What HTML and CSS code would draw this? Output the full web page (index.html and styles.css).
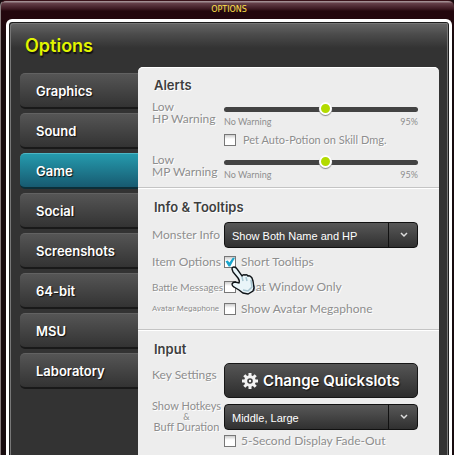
FILE: index.html
```html
<!DOCTYPE html>
<html lang="en">
<head>
  <meta charset="UTF-8">
  <meta name="viewport" content="width=device-width, initial-scale=1.0">
  <title>Options</title>
  <link rel="stylesheet" href="styles.css">
</head>
<body>
  <div class="window">
    <div class="titlebar">OPTIONS</div>

    <div class="panel">
      <h1 class="panel-title">Options</h1>

      <div class="panel-body">
        <nav class="tabs">
          <button type="button" class="tab">Graphics</button>
          <button type="button" class="tab">Sound</button>
          <button type="button" class="tab active">Game</button>
          <button type="button" class="tab">Social</button>
          <button type="button" class="tab">Screenshots</button>
          <button type="button" class="tab">64-bit</button>
          <button type="button" class="tab">MSU</button>
          <button type="button" class="tab">Laboratory</button>
        </nav>

        <form class="settings">
          <section class="section alerts">
            <h2>Alerts</h2>
            <div class="row slider-row">
              <label class="label two-line" for="hpWarning">Low<br>HP Warning</label>
              <div class="slider">
                <input type="range" id="hpWarning" min="0" max="95" value="50">
                <div class="scale"><span>No Warning</span><span>95%</span></div>
              </div>
            </div>
            <div class="row pet-row">
              <label class="check small"><input type="checkbox"> Pet Auto-Potion on Skill Dmg.</label>
            </div>
            <div class="row slider-row">
              <label class="label two-line" for="mpWarning">Low<br>MP Warning</label>
              <div class="slider">
                <input type="range" id="mpWarning" min="0" max="95" value="50">
                <div class="scale"><span>No Warning</span><span>95%</span></div>
              </div>
            </div>
          </section>

          <section class="section">
            <h2>Info &amp; Tooltips</h2>
            <div class="row select-row">
              <label class="label" for="monsterInfo">Monster Info</label>
              <div class="dropdown">
                <select id="monsterInfo">
                  <option>Show Both Name and HP</option>
                </select>
                <svg class="arrow" viewBox="0 0 8 6"><path d="M1 1l3 3 3-3" /></svg>
              </div>
            </div>
            <div class="row check-row">
              <span class="label">Item Options</span>
              <label class="check">
                <input type="checkbox" checked> Short Tooltips
                <svg class="pointer" viewBox="0 0 25 29">
                  <path class="hand" d="M1 3Q1 1 3 1Q5 1 6 3L11 10Q12 8 14 9Q16 8 17 10Q19 9 21 12L22 15L23 22L22 25L17 28L12 27L8 24L3 21Q1 20 1 18Q2 16 4 16L8 17Q9 15 7 12L2 6Z" />
                  <path class="shade" d="M20 14L21 21L17 25L12 24M11 11L12 15M15 11L16 15" />
                </svg>
              </label>
            </div>
            <div class="row check-row">
              <span class="label narrow">Battle Messages</span>
              <label class="check"><input type="checkbox"> Chat Window Only</label>
            </div>
            <div class="row check-row">
              <span class="label narrower">Avatar Megaphone</span>
              <label class="check"><input type="checkbox"> Show Avatar Megaphone</label>
            </div>
          </section>

          <section class="section">
            <h2>Input</h2>
            <div class="row button-row">
              <span class="label">Key Settings</span>
              <button type="button" class="quickslots">
                <svg class="gear" viewBox="0 0 16 16">
                  <path class="teeth" d="M8 0v16M0 8h16M2.3 2.3l11.4 11.4M13.7 2.3L2.3 13.7" />
                  <circle class="wheel" cx="8" cy="8" r="4.3" />
                  <circle class="hub" cx="8" cy="8" r="1.2" />
                </svg>
                Change Quickslots
              </button>
            </div>
            <div class="row select-row">
              <label class="label three-line" for="hotkeys">Show Hotkeys<br><span>&amp;</span><br>Buff Duration</label>
              <div class="dropdown">
                <select id="hotkeys">
                  <option>Middle, Large</option>
                </select>
                <svg class="arrow" viewBox="0 0 8 6"><path d="M1 1l3 3 3-3" /></svg>
              </div>
            </div>
            <div class="row fade-row">
              <label class="check"><input type="checkbox"> 5-Second Display Fade-Out</label>
            </div>
          </section>
        </form>
      </div>
    </div>
  </div>
</body>
</html>
```

FILE: styles.css
```css
* {
  box-sizing: border-box;
}

body {
  margin: 0;
  background-color: #170b0e;
  font-family: Lato, "Open Sans", sans-serif;
  color: #8e8e8e;
}

.window {
  min-height: 100vh;
  padding: 0 2px 0 5px;
  display: flex;
  flex-direction: column;
  border-top: 1px solid #3a1219;
  border-left: 1px solid #8a7f7f;
  border-radius: 6px 6px 0 0;
  background: linear-gradient(#a08c90 0, #a08c90 1px, #66414a 2px, #3b1820 8px, #23070d 10px, #23070d 16px, #170b0e 40px);
}

.titlebar {
  height: 18px;
  font-family: "DejaVu Sans", sans-serif;
  font-size: 8px;
  line-height: 18px;
  text-align: center;
  color: #ffe14a;
}

.panel {
  flex: 1;
  padding: 0 10px 0 11px;
  border: 3px solid #fff;
  border-bottom: none;
  border-radius: 6px 6px 0 0;
  background: linear-gradient(#696969, #4c4c4c 12px, #333 26px);
  box-shadow: inset 1px 1px 0 #1d1d1d, inset -1px 0 0 #1d1d1d, inset 2px 2px 0 #777, inset -2px 0 0 #777;
}

.panel-title {
  margin: 0;
  padding: 12px 0 9px 5px;
  font-family: Inter, "Liberation Sans", sans-serif;
  font-size: 18px;
  line-height: 24px;
  font-weight: 600;
  color: #e1f500;
  text-shadow: 1px 2px 1px #111;
}

.panel-body {
  display: grid;
  grid-template-columns: 118px 1fr;
}

.tabs {
  padding-top: 6px;
  display: flex;
  flex-direction: column;
  gap: 4px;
}

.tab {
  height: 36px;
  padding: 0 0 0 16px;
  border: none;
  border-top: 1px solid #626262;
  border-bottom: 2px solid #191919;
  border-radius: 5px 0 0 5px;
  background: linear-gradient(#555, #333);
  color: #fff;
  font-family: Inter, "Liberation Sans", sans-serif;
  font-size: 13px;
  font-weight: 600;
  text-align: left;
  text-shadow: 1px 1px 1px #111;
  cursor: pointer;
}

.tab.active {
  border-top-color: #4db6c5;
  border-bottom-color: #0c2e38;
  background: linear-gradient(#259aad, #175a70);
}

.settings {
  border-radius: 5px 5px 0 0;
  background-color: #ededed;
  box-shadow: inset 0 1px 0 #fff;
}

.section {
  padding: 9px 21px 9px 14px;
  border-bottom: 1px solid #c4c4c4;
  box-shadow: 0 1px 0 #fff;
}

.section.alerts {
  padding-top: 8px;
  padding-bottom: 4px;
}

.section:last-child {
  padding-bottom: 4px;
  border-bottom: none;
  box-shadow: none;
}

.section h2 {
  margin: 0 0 4px 2px;
  font-family: Inter, "Liberation Sans", sans-serif;
  font-size: 13px;
  line-height: 20px;
  font-weight: 600;
  color: #3e3e3e;
  text-shadow: 1px 1px 0 #fff;
}

.section.alerts h2 {
  margin-bottom: 6px;
}

.row {
  display: grid;
  grid-template-columns: 72px 1fr;
  align-items: center;
}

.label {
  font-size: 12px;
  line-height: 14px;
  white-space: nowrap;
  text-shadow: 1px 1px 0 #fff;
}

.label.two-line {
  align-self: start;
  line-height: 12px;
}

.label.narrow {
  font-size: 10px;
}

.label.narrower {
  font-family: Roboto, sans-serif;
  font-size: 8px;
}

.label.three-line {
  font-size: 11px;
  line-height: 10px;
  text-align: center;
  justify-self: start;
}

.label.three-line span {
  font-size: 9px;
}

.slider-row {
  height: 29px;
}

.slider input {
  display: block;
  width: 100%;
  height: 13px;
  margin: 0;
  appearance: none;
  background: none;
}

.slider input::-webkit-slider-runnable-track {
  height: 5px;
  border-radius: 3px;
  background-color: #434343;
}

.slider input::-webkit-slider-thumb {
  width: 13px;
  height: 13px;
  margin-top: -5px;
  appearance: none;
  border: 2px solid #fff;
  border-radius: 50%;
  background-color: #b3db00;
  box-shadow: 0 1px 1px #888;
}

.scale {
  display: flex;
  justify-content: space-between;
  font-size: 9px;
  line-height: 12px;
}

.pet-row {
  height: 24px;
  padding-top: 3px;
  align-items: start;
}

.check {
  grid-column: 2;
  position: relative;
  display: flex;
  align-items: center;
  gap: 5px;
  font-size: 12px;
  line-height: 14px;
  white-space: nowrap;
  text-shadow: 1px 1px 0 #fff;
}

.check.small {
  gap: 7px;
  font-size: 11px;
}

.check input {
  width: 12px;
  height: 12px;
  margin: 0;
  appearance: none;
  flex: none;
  border: 1px solid #777;
  background: linear-gradient(#ccc, #fff 4px);
}

.check input:checked::before {
  content: "";
  display: block;
  height: 10px;
  background-color: #1aa5cd;
  clip-path: polygon(5% 42%, 28% 35%, 44% 55%, 78% 8%, 100% 8%, 52% 95%, 36% 95%);
}

.pointer {
  position: absolute;
  left: 7px;
  top: 11px;
  z-index: 1;
  width: 25px;
  height: 29px;
}

.hand {
  fill: #e9f5f9;
  stroke: #0d1216;
  stroke-width: 1.4;
}

.shade {
  fill: none;
  stroke: #a5c3cf;
  stroke-width: 1.5;
}

.select-row {
  height: 27px;
}

.check-row {
  height: 22px;
}

.select-row + .check-row {
  height: 28px;
}

.dropdown {
  position: relative;
}

.dropdown select {
  display: block;
  width: 100%;
  height: 26px;
  padding: 3px 36px 0 7px;
  appearance: none;
  border: 1px solid #111;
  border-radius: 4px;
  background: linear-gradient(#111, #111) right 28px top / 1px 100% no-repeat, linear-gradient(#585858, #303030);
  color: #fff;
  font-family: "Liberation Sans", Arial, sans-serif;
  font-size: 11px;
}

.arrow {
  position: absolute;
  right: 10px;
  top: 10px;
  width: 8px;
  height: 6px;
  fill: none;
  stroke: #ddd;
  stroke-width: 1.5;
  pointer-events: none;
}

.button-row {
  height: 38px;
  align-items: start;
}

.button-row .label {
  padding-top: 5px;
}

.quickslots {
  height: 35px;
  padding: 0;
  display: flex;
  align-items: center;
  justify-content: center;
  gap: 5px;
  border: 1px solid #171717;
  border-radius: 5px;
  background: linear-gradient(#555, #2d2d2d);
  color: #fff;
  font-family: Inter, "Liberation Sans", sans-serif;
  font-size: 15px;
  font-weight: 600;
  white-space: nowrap;
  text-shadow: 1px 1px 1px #111;
  cursor: pointer;
}

.gear {
  width: 16px;
  height: 16px;
  flex: none;
}

.teeth {
  stroke: #f2f2f2;
  stroke-width: 3;
}

.wheel {
  fill: #3c3c3c;
  stroke: #f2f2f2;
  stroke-width: 3;
}

.hub {
  fill: #f2f2f2;
}

.fade-row {
  height: 26px;
}
```
